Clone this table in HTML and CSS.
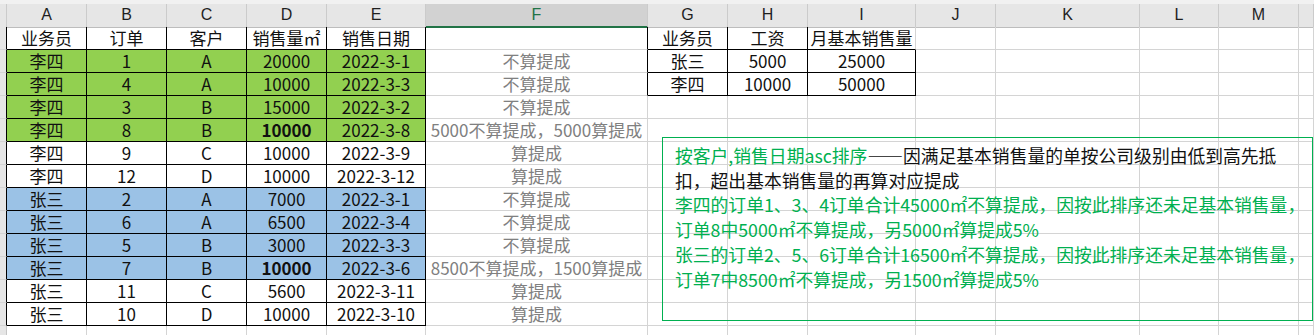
FILE: index.html
```html
<!DOCTYPE html>
<html lang="zh-CN">
<head>
<meta charset="utf-8">
<title>提成计算</title>
<link rel="stylesheet" href="styles.css">
</head>
<body>
<div class="sheet">
  <div class="topstrip"></div>
  <div class="row head">
    <div class="h corner"></div><div class="h">A</div><div class="h">B</div><div class="h">C</div><div class="h">D</div><div class="h">E</div><div class="h sel">F</div><div class="h">G</div><div class="h">H</div><div class="h">I</div><div class="h">J</div><div class="h">K</div><div class="h">L</div><div class="h">M</div><div class="h"></div>
  </div>

  <div class="row">
    <div class="rh bk"></div><div class="c b">业务员</div><div class="c b">订单</div><div class="c b">客户</div><div class="c b">销售量㎡</div><div class="c b">销售日期</div><div class="c br"></div><div class="c b">业务员</div><div class="c b">工资</div><div class="c bb ov">月基本销售量</div><div class="c"></div><div class="c"></div><div class="c"></div><div class="c"></div><div class="c"></div>
  </div>
  <div class="row">
    <div class="rh bk"></div><div class="c b g">李四</div><div class="c b g">1</div><div class="c b g">A</div><div class="c b g">20000</div><div class="c b g">2022-3-1</div><div class="c br f">不算提成</div><div class="c b">张三</div><div class="c b">5000</div><div class="c b">25000</div><div class="c"></div><div class="c"></div><div class="c"></div><div class="c"></div><div class="c"></div>
  </div>
  <div class="row">
    <div class="rh bk"></div><div class="c b g">李四</div><div class="c b g">4</div><div class="c b g">A</div><div class="c b g">10000</div><div class="c b g">2022-3-3</div><div class="c br f">不算提成</div><div class="c b">李四</div><div class="c b">10000</div><div class="c b">50000</div><div class="c"></div><div class="c"></div><div class="c"></div><div class="c"></div><div class="c"></div>
  </div>
  <div class="row">
    <div class="rh bk"></div><div class="c b g">李四</div><div class="c b g">3</div><div class="c b g">B</div><div class="c b g">15000</div><div class="c b g">2022-3-2</div><div class="c f">不算提成</div><div class="c"></div><div class="c"></div><div class="c"></div><div class="c"></div><div class="c"></div><div class="c"></div><div class="c"></div><div class="c"></div>
  </div>
  <div class="row">
    <div class="rh bk"></div><div class="c b g">李四</div><div class="c b g">8</div><div class="c b g">B</div><div class="c b g bold">10000</div><div class="c b g">2022-3-8</div><div class="c f">5000不算提成，5000算提成</div><div class="c"></div><div class="c"></div><div class="c"></div><div class="c"></div><div class="c"></div><div class="c"></div><div class="c"></div><div class="c"></div>
  </div>
  <div class="row">
    <div class="rh bk"></div><div class="c b">李四</div><div class="c b">9</div><div class="c b">C</div><div class="c b">10000</div><div class="c b">2022-3-9</div><div class="c f">算提成</div><div class="c"></div><div class="c"></div><div class="c"></div><div class="c"></div><div class="c"></div><div class="c"></div><div class="c"></div><div class="c"></div>
  </div>
  <div class="row">
    <div class="rh bk"></div><div class="c b">李四</div><div class="c b">12</div><div class="c b">D</div><div class="c b">10000</div><div class="c b">2022-3-12</div><div class="c f">算提成</div><div class="c"></div><div class="c"></div><div class="c"></div><div class="c"></div><div class="c"></div><div class="c"></div><div class="c"></div><div class="c"></div>
  </div>
  <div class="row">
    <div class="rh bk"></div><div class="c b bl">张三</div><div class="c b bl">2</div><div class="c b bl">A</div><div class="c b bl">7000</div><div class="c b bl">2022-3-1</div><div class="c f">不算提成</div><div class="c"></div><div class="c"></div><div class="c"></div><div class="c"></div><div class="c"></div><div class="c"></div><div class="c"></div><div class="c"></div>
  </div>
  <div class="row">
    <div class="rh bk"></div><div class="c b bl">张三</div><div class="c b bl">6</div><div class="c b bl">A</div><div class="c b bl">6500</div><div class="c b bl">2022-3-4</div><div class="c f">不算提成</div><div class="c"></div><div class="c"></div><div class="c"></div><div class="c"></div><div class="c"></div><div class="c"></div><div class="c"></div><div class="c"></div>
  </div>
  <div class="row">
    <div class="rh bk"></div><div class="c b bl">张三</div><div class="c b bl">5</div><div class="c b bl">B</div><div class="c b bl">3000</div><div class="c b bl">2022-3-3</div><div class="c f">不算提成</div><div class="c"></div><div class="c"></div><div class="c"></div><div class="c"></div><div class="c"></div><div class="c"></div><div class="c"></div><div class="c"></div>
  </div>
  <div class="row">
    <div class="rh bk"></div><div class="c b bl">张三</div><div class="c b bl">7</div><div class="c b bl">B</div><div class="c b bl bold">10000</div><div class="c b bl">2022-3-6</div><div class="c f">8500不算提成，1500算提成</div><div class="c"></div><div class="c"></div><div class="c"></div><div class="c"></div><div class="c"></div><div class="c"></div><div class="c"></div><div class="c"></div>
  </div>
  <div class="row">
    <div class="rh bk"></div><div class="c b">张三</div><div class="c b">11</div><div class="c b">C</div><div class="c b">5600</div><div class="c b">2022-3-11</div><div class="c f">算提成</div><div class="c"></div><div class="c"></div><div class="c"></div><div class="c"></div><div class="c"></div><div class="c"></div><div class="c"></div><div class="c"></div>
  </div>
  <div class="row">
    <div class="rh bk"></div><div class="c b">张三</div><div class="c b">10</div><div class="c b">D</div><div class="c b">10000</div><div class="c b">2022-3-10</div><div class="c f">算提成</div><div class="c"></div><div class="c"></div><div class="c"></div><div class="c"></div><div class="c"></div><div class="c"></div><div class="c"></div><div class="c"></div>
  </div>
  <div class="row">
    <div class="rh"></div><div class="c"></div><div class="c"></div><div class="c"></div><div class="c"></div><div class="c"></div><div class="c"></div><div class="c"></div><div class="c"></div><div class="c"></div><div class="c"></div><div class="c"></div><div class="c"></div><div class="c"></div><div class="c"></div>
  </div>

  <div class="note">
    <p class="line"><span class="green">按客户,销售日期asc排序</span>——因满足基本销售量的单按公司级别由低到高先抵</p>
    <p class="line">扣，超出基本销售量的再算对应提成</p>
    <p class="line green">李四的订单1、3、4订单合计45000㎡不算提成，因按此排序还未足基本销售量，</p>
    <p class="line green">订单8中5000㎡不算提成，另5000㎡算提成5%</p>
    <p class="line green">张三的订单2、5、6订单合计16500㎡不算提成，因按此排序还未足基本销售量，</p>
    <p class="line green">订单7中8500㎡不算提成，另1500㎡算提成5%</p>
  </div>
</div>
</body>
</html>
```

FILE: styles.css
```css
html, body {
  margin: 0;
  padding: 0;
  background: #ffffff;
}
body {
  width: 1314px;
  height: 335px;
  overflow: hidden;
  font-family: "Noto Sans CJK SC", "Noto Sans", sans-serif;
}
.sheet {
  --cols: 7px 80px 80px 80px 80px 99px 222px 80px 80px 108px 80px 144px 79px 80px 1fr;
  position: relative;
  width: 1314px;
}
.topstrip {
  height: 4px;
  background: #f1f1f1;
}
.row {
  display: grid;
  grid-template-columns: var(--cols);
  height: 23px;
}
.h {
  box-sizing: border-box;
  background: #e6e6e6;
  border-right: 1px solid #cbcbcb;
  border-bottom: 1px solid #bdbdbd;
  color: #1f1f1f;
  font-family: "Liberation Sans", "Noto Sans", sans-serif;
  font-size: 16px;
  line-height: 22px;
  text-align: center;
}
.h.sel {
  background: #d2d2d2;
  color: #217346;
  border-bottom: 2px solid #217346;
}
.c, .rh {
  box-sizing: border-box;
  border-right: 1px solid #d4d4d4;
  border-bottom: 1px solid #d4d4d4;
  font-size: 17px;
  line-height: 22px;
  text-align: center;
  color: #111111;
  white-space: nowrap;
}
.rh {
  background: #e6e6e6;
  border-right-color: #c6c6c6;
}
.rh.bk {
  border-right-color: #000000;
}
.c.b {
  border-right-color: #000000;
  border-bottom-color: #000000;
}
.c.br {
  border-right-color: #000000;
}
.c.bb {
  border-bottom-color: #000000;
}
.c.ov {
  overflow: visible;
  position: relative;
  z-index: 1;
}
.c.g {
  background: #92d050;
}
.c.bl {
  background: #9bc2e6;
}
.c.bold {
  font-weight: 700;
}
.c.f {
  color: #808080;
}
.note {
  position: absolute;
  left: 662px;
  top: 137px;
  width: 651px;
  height: 184px;
  box-sizing: border-box;
  border: 1.5px solid #00b050;
  padding: 5px 0 0 12px;
}
.line {
  margin: 0;
  font-size: 17.8px;
  line-height: 24.7px;
  color: #111111;
  white-space: nowrap;
}
.green {
  color: #00b050;
}
```
